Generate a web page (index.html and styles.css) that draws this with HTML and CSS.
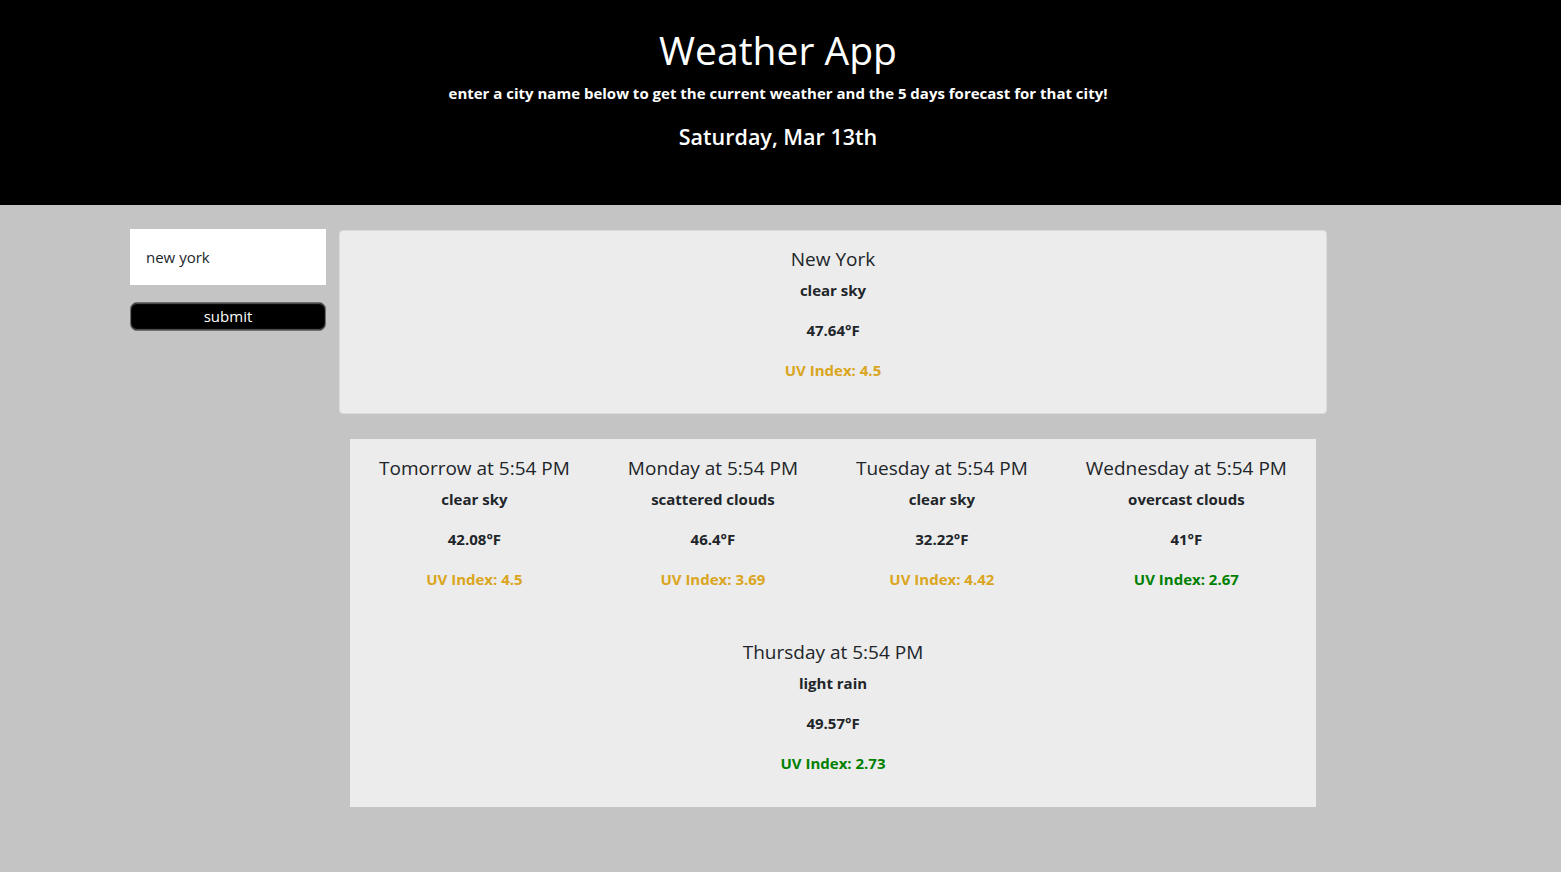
FILE: index.html
```html
<!DOCTYPE html>
<html lang="en">
<head>
<meta charset="utf-8">
<title>Weather App</title>
<link rel="stylesheet" href="styles.css">
</head>
<body>
<header class="hero">
  <h1 class="hero-title">Weather App</h1>
  <p class="hero-sub">enter a city name below to get the current weather and the 5 days forecast for that city!</p>
  <h4 class="hero-date">Saturday, Mar 13th</h4>
</header>
<main class="main">
  <aside class="search">
    <input class="search-input" type="text" value="new york">
    <button class="search-btn" type="button">submit</button>
  </aside>
  <section class="results">
    <div class="current">
      <h5 class="w-title">New York</h5>
      <p class="w-line">clear sky</p>
      <p class="w-line">47.64°F</p>
      <p class="w-line uv-mid">UV Index: 4.5</p>
    </div>
    <div class="forecast">
      <div class="day">
        <h5 class="w-title">Tomorrow at 5:54 PM</h5>
        <p class="w-line">clear sky</p>
        <p class="w-line">42.08°F</p>
        <p class="w-line uv-mid">UV Index: 4.5</p>
      </div>
      <div class="day">
        <h5 class="w-title">Monday at 5:54 PM</h5>
        <p class="w-line">scattered clouds</p>
        <p class="w-line">46.4°F</p>
        <p class="w-line uv-mid">UV Index: 3.69</p>
      </div>
      <div class="day">
        <h5 class="w-title">Tuesday at 5:54 PM</h5>
        <p class="w-line">clear sky</p>
        <p class="w-line">32.22°F</p>
        <p class="w-line uv-mid">UV Index: 4.42</p>
      </div>
      <div class="day">
        <h5 class="w-title">Wednesday at 5:54 PM</h5>
        <p class="w-line">overcast clouds</p>
        <p class="w-line">41°F</p>
        <p class="w-line uv-low">UV Index: 2.67</p>
      </div>
      <div class="row-break"></div>
      <div class="day">
        <h5 class="w-title">Thursday at 5:54 PM</h5>
        <p class="w-line">light rain</p>
        <p class="w-line">49.57°F</p>
        <p class="w-line uv-low">UV Index: 2.73</p>
      </div>
    </div>
  </section>
</main>
</body>
</html>
```

FILE: styles.css
```css
* { box-sizing: border-box; }

html, body {
  margin: 0;
  padding: 0;
}

body {
  background: #c4c4c4;
  font-family: "Open Sans", "Noto Sans", "Liberation Sans", sans-serif;
  font-size: 16px;
  line-height: 1.5;
  color: #212529;
  min-height: 872px;
}

.hero {
  background: #000;
  color: #fff;
  text-align: center;
  padding: 27px 5px 0 0;
  height: 205px;
}

.hero-title {
  margin: 0 0 7px;
  font-size: 39px;
  font-weight: 500;
  line-height: 1.2;
}

.hero-sub {
  margin: 0 0 19px;
  font-size: 15px;
  font-weight: 700;
  line-height: 24px;
}

.hero-date {
  margin: 0;
  font-size: 21.5px;
  font-weight: 600;
  line-height: 1.2;
}

.main {
  display: flex;
  align-items: flex-start;
  padding: 24px 0 0 130px;
  gap: 13px;
}

.search {
  width: 196px;
  display: flex;
  flex-direction: column;
  gap: 17px;
}

.search-input {
  width: 196px;
  height: 56px;
  border: none;
  background: #fff;
  padding: 0 16px;
  font-family: inherit;
  font-size: 15px;
  color: #212529;
  outline: none;
}

.search-btn {
  width: 196px;
  height: 29px;
  background: #000;
  color: #fff;
  border: 1px solid #6e6e6e;
  border-radius: 7px;
  font-family: inherit;
  font-size: 15px;
  line-height: 1;
  padding: 0;
  box-shadow: inset 0 1px 1px #555, inset 0 -1px 1px #555;
}

.results {
  width: 988px;
  margin-top: 1px;
}

.current {
  background: #ececec;
  border: 1px solid #dcdcdc;
  border-radius: 4px;
  padding: 16px 16px 15px;
  text-align: center;
}

.w-title {
  margin: 0 0 7px;
  font-size: 19px;
  font-weight: 400;
  line-height: 24px;
}

.w-line {
  margin: 0 0 16px;
  font-size: 15px;
  font-weight: 700;
  line-height: 24px;
}

.uv-mid { color: #daa520; }
.uv-low { color: #008000; }

.forecast {
  margin: 25px 11px 0;
  background: #ececec;
  display: flex;
  flex-wrap: wrap;
  justify-content: space-around;
}

.row-break {
  flex-basis: 100%;
  height: 0;
}

.day {
  text-align: center;
  padding: 17px 0 16px;
}
```
